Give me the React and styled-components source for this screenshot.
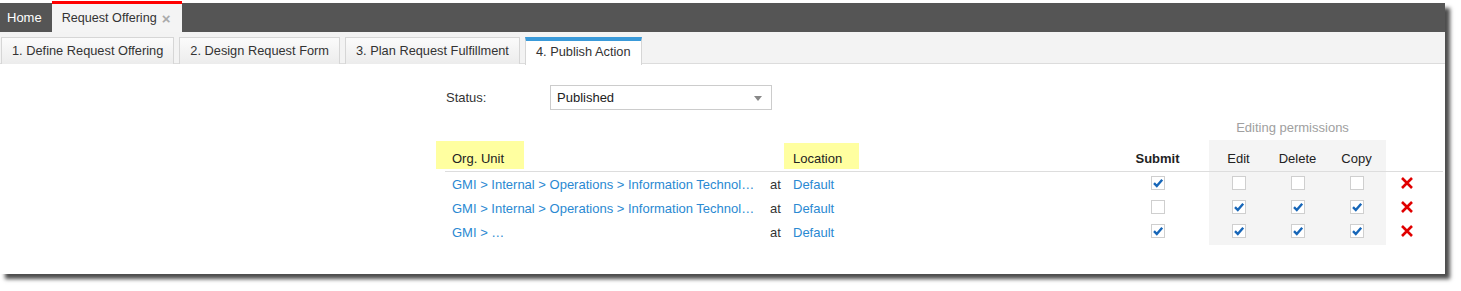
import React from 'react'
import styled, { createGlobalStyle } from 'styled-components'

const GlobalStyle = createGlobalStyle`
  html, body {
    min-height: 291px;
  }
  body {
    margin: 0;
    background: #fff;
    font-family: "Liberation Sans", Arial, sans-serif;
    font-size: 13px;
    color: #333;
  }
`

const Window = styled.div`
  width: 1445px;
  margin: 3px 0 14px;
  background: #fff;
  box-shadow: 5px 5px 4px rgba(0, 0, 0, 0.7);
`

const TopBar = styled.div`
  display: flex;
  height: 29px;
  background: #555;
`

const HomeTab = styled.div`
  padding: 0 10px 0 7px;
  line-height: 29px;
  color: #fff;
`

const OpenTab = styled.div`
  display: flex;
  align-items: center;
  margin-top: -2px;
  width: 130px;
  box-sizing: border-box;
  padding: 0 0 0 10px;
  border-top: 3px solid #f00;
  background: #f4f4f4;
  color: #333;
  font-size: 12.6px;
`

const CloseMark = styled.span`
  margin-left: 5px;
  color: #aaa;
  font-size: 15px;
  font-weight: bold;
  line-height: 1;
`

const StepBar = styled.div`
  display: flex;
  align-items: flex-start;
  gap: 5px;
  height: 32px;
  padding: 5px 0 0 1px;
  box-sizing: border-box;
  background: #f3f3f3;
  border-bottom: 1px solid #dcdcdc;
`

const Step = styled.div`
  padding: 0 10px;
  border: 1px solid #d6d6d6;
  border-bottom: none;
  font-size: 12.8px;
  line-height: ${p => (p.$active ? '22px' : '26px')};
  padding-bottom: ${p => (p.$active ? '2px' : '0')};
  border-top: ${p => (p.$active ? '4px solid #3a9ad9' : '1px solid #d6d6d6')};
  background: ${p => (p.$active ? '#fff' : 'linear-gradient(#fbfbfb, #ececec)')};
  margin-bottom: ${p => (p.$active ? '-1px' : '0')};
  color: #333;
  white-space: nowrap;
`

const Content = styled.div`
  height: 210px;
  padding: 21px 0 0 436px;
  box-sizing: border-box;
`

const StatusRow = styled.div`
  display: flex;
  align-items: center;
  padding-left: 10px;
`

const Label = styled.div`
  width: 104px;
  color: #333;
`

const Select = styled.div`
  position: relative;
  width: 222px;
  height: 25px;
  box-sizing: border-box;
  border: 1px solid #ccc;
  padding-left: 6px;
  line-height: 23px;
  color: #222;
`

const Arrow = styled.span`
  position: absolute;
  right: 9px;
  top: 10px;
  width: 0;
  height: 0;
  border-left: 4px solid transparent;
  border-right: 4px solid transparent;
  border-top: 5px solid #888;
`

const Grid = styled.div`
  display: grid;
  grid-template-columns: 329px 19px 75px 261px 75px 14px 59px 59px 59px 42px 17px;
  grid-template-rows: 25px 31px 1px 24px 24px 24px 1px;
  margin-top: 5px;
`

const Cell = styled.div`
  grid-column: ${p => p.$col};
  grid-row: ${p => p.$row};
  display: flex;
  align-items: center;
  justify-content: ${p => (p.$center ? 'center' : 'flex-start')};
  padding-left: ${p => p.$pad || 0}px;
  padding-bottom: ${p => (p.$center ? '2px' : '0')};
  white-space: nowrap;
  overflow: hidden;
`

const PermTitle = styled.div`
  grid-column: 7 / 10;
  grid-row: 1;
  display: flex;
  align-items: center;
  justify-content: center;
  padding-right: 10px;
  color: #a0a0a0;
`

const PermPanel = styled.div`
  grid-column: 7 / 10;
  grid-row: 2 / -1;
  background: #f4f4f4;
`

const HeadMark = styled.div`
  grid-column: ${p => p.$col};
  grid-row: 2;
  align-self: end;
  justify-self: start;
  margin-bottom: 2px;
  padding: ${p => p.$top}px ${p => p.$right}px 3px ${p => p.$left}px;
  line-height: 15px;
  background: #ffffa0;
  color: #222;
`

const HeadCell = styled.div`
  grid-column: ${p => p.$col};
  grid-row: 2;
  align-self: end;
  text-align: center;
  padding-bottom: 5px;
  line-height: 15px;
  color: #222;
  font-weight: ${p => (p.$bold ? 'bold' : 'normal')};
`

const Divider = styled.div`
  grid-column: 1 / -1;
  grid-row: 3;
  margin: 0 2px 0 9px;
  background: #ddd;
`

const OrgLink = styled.a`
  color: #2a89d2;
  text-decoration: none;
`

const Box = styled.span`
  display: inline-flex;
  align-items: center;
  justify-content: center;
  width: 14px;
  height: 14px;
  box-sizing: border-box;
  border: 1px solid #cfcfcf;
  background: #fff;
`

const Check = ({ on }) => (
  <Box>
    {on && (
      <svg width="12" height="12" viewBox="0 0 12 12">
        <path d="M2 6.2 L4.8 9 L10.2 2.8" fill="none" stroke="#1766b8" strokeWidth="2.4" />
      </svg>
    )}
  </Box>
)

const Remove = () => (
  <svg width="12" height="12" viewBox="0 0 12 12">
    <path d="M1 1 L11 11 M11 1 L1 11" stroke="#e00000" strokeWidth="2.6" />
  </svg>
)

const rows = [
  { org: 'GMI > Internal > Operations > Information Technol…', perms: [true, false, false, false] },
  { org: 'GMI > Internal > Operations > Information Technol…', perms: [false, true, true, true] },
  { org: 'GMI > …', perms: [true, true, true, true] },
]

const permCols = [5, 7, 8, 9]

export default function App() {
  return (
    <>
      <GlobalStyle />
      <Window>
        <TopBar>
          <HomeTab>Home</HomeTab>
          <OpenTab>
            Request Offering<CloseMark>×</CloseMark>
          </OpenTab>
        </TopBar>
        <StepBar>
          <Step>1. Define Request Offering</Step>
          <Step>2. Design Request Form</Step>
          <Step>3. Plan Request Fulfillment</Step>
          <Step $active>4. Publish Action</Step>
        </StepBar>
        <Content>
          <StatusRow>
            <Label>Status:</Label>
            <Select>
              Published
              <Arrow />
            </Select>
          </StatusRow>
          <Grid>
            <PermPanel />
            <PermTitle>Editing permissions</PermTitle>
            <HeadMark $col={1} $top={10} $left={16} $right={20}>Org. Unit</HeadMark>
            <HeadMark $col={3} $top={8} $left={9} $right={17}>Location</HeadMark>
            <HeadCell $col={5} $bold>Submit</HeadCell>
            <HeadCell $col={7}>Edit</HeadCell>
            <HeadCell $col={8}>Delete</HeadCell>
            <HeadCell $col={9}>Copy</HeadCell>
            <Divider />
            {rows.map((r, i) => (
              <React.Fragment key={i}>
                <Cell $col={1} $row={i + 4} $pad={16}>
                  <OrgLink href="#">{r.org}</OrgLink>
                </Cell>
                <Cell $col={2} $row={i + 4} $pad={5}>at</Cell>
                <Cell $col={3} $row={i + 4} $pad={9}>
                  <OrgLink href="#">Default</OrgLink>
                </Cell>
                {r.perms.map((on, j) => (
                  <Cell key={j} $col={permCols[j]} $row={i + 4} $center>
                    <Check on={on} />
                  </Cell>
                ))}
                <Cell $col={10} $row={i + 4} $center>
                  <Remove />
                </Cell>
              </React.Fragment>
            ))}
          </Grid>
        </Content>
      </Window>
    </>
  )
}
